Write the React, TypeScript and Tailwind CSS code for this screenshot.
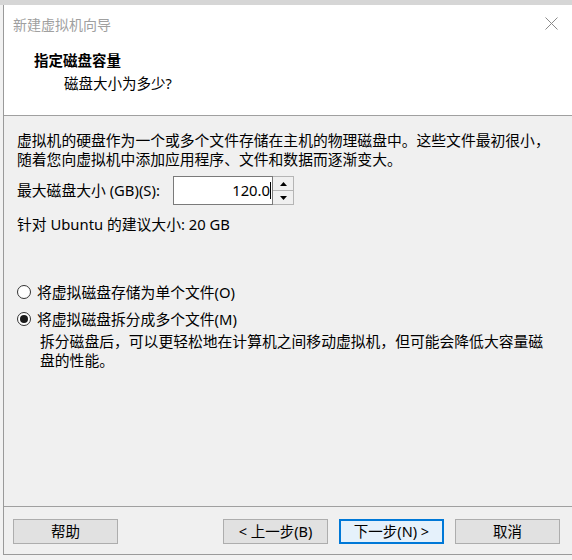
import React from 'react'

const font = { fontFamily: '"Noto Sans", "Noto Sans CJK SC", sans-serif' }

function WizardButton({ label, focused = false }: { label: string; focused?: boolean }) {
  return (
    <button
      className={
        focused
          ? 'w-[105px] h-[25px] border-2 border-[#0078d7] bg-[#e5f1fb] text-[14.5px] leading-none text-black'
          : 'w-[105px] h-[25px] border border-[#adadad] bg-[#e1e1e1] text-[14.5px] leading-none text-black'
      }
    >
      {label}
    </button>
  )
}

function Radio({ checked, label }: { checked: boolean; label: string }) {
  return (
    <div className="flex items-center h-[20px]">
      <span className="w-[14px] h-[14px] rounded-full border border-[#333] bg-white flex items-center justify-center">
        {checked && <span className="w-[8px] h-[8px] rounded-full bg-[#1a1a1a]" />}
      </span>
      <span className="ml-[6px]">{label}</span>
    </div>
  )
}

export default function App() {
  return (
    <div className="w-[572px] h-[560px] bg-[#f2f2f2] overflow-hidden" style={font}>
      <div className="h-[5px] bg-[#d6d6d6]" />
      <div className="ml-[3px] w-[569px] h-[550px] border-l border-b border-[#9a9a9a] bg-[#f0f0f0] flex flex-col text-[14.8px] text-black">
        {/* title + header */}
        <div className="bg-white border-b border-[#a0a0a0] h-[111px] flex flex-col">
          <div className="h-[38px] flex items-center justify-between pl-[9px] pr-[14px]">
            <span className="text-[14px] text-[#a0a0a0]">新建虚拟机向导</span>
            <svg width="13" height="13" viewBox="0 0 13 13" className="mb-[2px]">
              <path d="M0.5 0.5 L12.5 12.5 M12.5 0.5 L0.5 12.5" stroke="#8a8a8a" strokeWidth="1" />
            </svg>
          </div>
          <div className="pl-[30px] mt-[7px] font-bold text-[14.5px] leading-[20px]">指定磁盘容量</div>
          <div className="pl-[60px] mt-[3px] text-[14.5px] leading-[20px]">磁盘大小为多少?</div>
        </div>

        {/* body */}
        <div className="flex-1 flex flex-col pl-[13px] pt-[15px]">
          <div className="leading-[19px]">
            <div>虚拟机的硬盘作为一个或多个文件存储在主机的物理磁盘中。这些文件最初很小，</div>
            <div>随着您向虚拟机中添加应用程序、文件和数据而逐渐变大。</div>
          </div>

          <div className="flex items-center mt-[7px] h-[29px]">
            <span className="w-[156px]">最大磁盘大小 (GB)(S):</span>
            <div className="w-[100px] h-[29px] border border-[#7a7a7a] bg-white flex items-center justify-end pr-[1px]">
              <span>120.0</span>
              <span className="w-[1px] h-[17px] bg-black" />
            </div>
            <div className="w-[21px] h-[29px] border border-l-0 border-[#b5b5b5] flex flex-col">
              <div className="flex-1 flex items-center justify-center border-b border-[#b5b5b5] bg-[#f0f0f0]">
                <svg width="7" height="4" viewBox="0 0 7 4"><path d="M3.5 0 L7 4 L0 4 Z" fill="#000" /></svg>
              </div>
              <div className="flex-1 flex items-center justify-center bg-[#f0f0f0]">
                <svg width="7" height="4" viewBox="0 0 7 4"><path d="M0 0 L7 0 L3.5 4 Z" fill="#000" /></svg>
              </div>
            </div>
          </div>

          <div className="mt-[9px] leading-[20px]">针对 Ubuntu 的建议大小: 20 GB</div>

          <div className="mt-[48px] flex flex-col gap-[7px]">
            <Radio checked={false} label="将虚拟磁盘存储为单个文件(O)" />
            <Radio checked={true} label="将虚拟磁盘拆分成多个文件(M)" />
          </div>
          <div className="pl-[23px] mt-[3px] leading-[19px]">
            <div>拆分磁盘后，可以更轻松地在计算机之间移动虚拟机，但可能会降低大容量磁</div>
            <div>盘的性能。</div>
          </div>
        </div>

        {/* footer */}
        <div className="h-[48px] border-t border-[#a0a0a0] flex items-center pl-[9px] pt-[2px]">
          <WizardButton label="帮助" />
          <div className="ml-[105px]">
            <WizardButton label="< 上一步(B)" />
          </div>
          <div className="ml-[11px]">
            <WizardButton label="下一步(N) >" focused />
          </div>
          <div className="ml-[11px]">
            <WizardButton label="取消" />
          </div>
        </div>
      </div>
    </div>
  )
}
